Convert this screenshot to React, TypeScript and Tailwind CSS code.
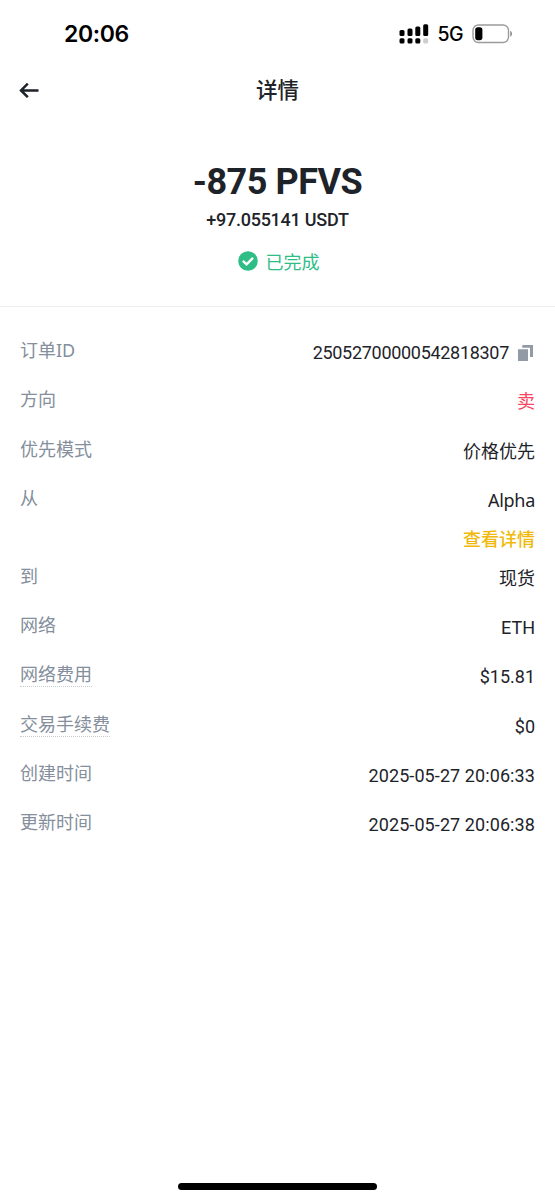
import type { ReactNode } from "react"
import clsx from "clsx"

const StatusBar = () => (
  <div className="flex h-[66px] items-center justify-between pl-16 pr-[41px] pt-px text-black">
    <span className="pt-px font-['Inter',sans-serif] text-[23px] font-semibold tracking-[-0.35px]">
      20:06
    </span>
    <div className="flex items-center">
      <svg width="30" height="20" viewBox="0 0 30 20" className="mr-[9px]">
        <rect x="0.5" y="6" width="5" height="6" rx="1.5" />
        <rect x="8.5" y="4.5" width="5" height="7.5" rx="1.5" />
        <rect x="16.3" y="2.5" width="5" height="9.5" rx="1.5" />
        <rect x="24.2" y="0.2" width="5" height="11.8" rx="1.5" />
        <rect x="0.5" y="14.2" width="5" height="5.2" rx="1.5" />
        <rect x="8.5" y="14.2" width="5" height="5.2" rx="1.5" />
        <rect x="16.3" y="14.2" width="5" height="5.2" rx="1.5" />
        <rect x="24.2" y="14.2" width="5" height="5.2" rx="1.5" fill="#cfcfcf" />
      </svg>
      <span className="mr-[9px] pt-[3px] font-['Inter',sans-serif] text-[19.5px] font-medium tracking-[-0.6px]">
        5G
      </span>
      <svg width="42" height="20" viewBox="0 0 42 20">
        <rect x="1" y="1" width="35.5" height="17.5" rx="5.5" fill="none" stroke="#9b9b9b" strokeWidth="1.4" />
        <rect x="3.2" y="3.2" width="7.2" height="13" rx="2.6" />
        <path d="M38.2 6.8c2.4.8 2.4 5.1 0 5.9z" fill="#8e8e8e" />
      </svg>
    </div>
  </div>
)

const Header = () => (
  <header className="grid h-12 grid-cols-3 items-center px-[19px]">
    <svg width="20" height="16" viewBox="0 0 20 16" fill="none" stroke="#1e2329" strokeWidth="2.5">
      <path d="M19.5 8.4H2M8.8 1.6 2 8.4l6.8 6.8" />
    </svg>
    <h1 className="pt-0.5 text-center text-[21.5px] font-medium leading-8">详情</h1>
  </header>
)

const Summary = () => (
  <section className="flex h-[193px] flex-col items-center border-b border-[#eaecef] pt-[46px]">
    <p className="text-[36px] font-bold leading-[44px] tracking-[-0.45px]">-875 PFVS</p>
    <p className="text-[18px] font-medium leading-8 tracking-[-0.25px]">+97.055141 USDT</p>
    <div className="mt-[9px] flex items-center gap-2 pl-[2px] text-lg leading-8 text-[#2ebd85]">
      <svg width="20" height="20" viewBox="0 0 20 20" className="relative -top-px">
        <circle cx="10" cy="10" r="9.8" fill="#2ebd85" />
        <path d="m4.9 9.8 3.7 3.6 6.4-6.6" fill="none" stroke="#fff" strokeWidth="2.4" />
      </svg>
      <span className="pt-0.5">已完成</span>
    </div>
  </section>
)

const CopyIcon = () => (
  <svg width="15" height="16" viewBox="0 0 15 16" fill="#929aa5">
    <path d="M0 4.2h10V16H0zM4.3 0H15v12h-3V2.8H4.3z" />
  </svg>
)

interface RowProps {
  label: string
  hint?: boolean
  children: ReactNode
}

const Row = ({ label, hint, children }: RowProps) => (
  <div className="flex min-h-[49.25px] items-start justify-between">
    <span
      className={clsx(
        "font-['Noto_Sans','Noto_Sans_CJK_SC',sans-serif] leading-[26px] text-[#848e9c]",
        hint && "h-[26px] border-b border-dotted border-[#c8cdd4]"
      )}
    >
      {label}
    </span>
    <div className="flex flex-col items-end pt-[3px] leading-[26px]">{children}</div>
  </div>
)

export default function App() {
  return (
    <div className="flex h-[1200px] w-[555px] flex-col bg-white font-['Roboto','Noto_Sans_CJK_SC',sans-serif] text-[#1e2329]">
      <StatusBar />
      <Header />
      <Summary />
      <main className="flex-1 px-5 pt-[30px] text-lg">
        <Row label="订单ID">
          <div className="flex items-center gap-[9px] pr-[2px]">
            <span className="tracking-[-0.3px]">25052700000542818307</span>
            <CopyIcon />
          </div>
        </Row>
        <Row label="方向">
          <span className="text-[#f6465d]">卖</span>
        </Row>
        <Row label="优先模式">价格优先</Row>
        <Row label="从">
          <span className="-mt-px font-['Noto_Sans',sans-serif] tracking-[-0.3px]">Alpha</span>
          <a className="mb-[10px] mt-[14px] font-medium text-[#f0b90b]">查看详情</a>
        </Row>
        <Row label="到">现货</Row>
        <Row label="网络">ETH</Row>
        <Row label="网络费用" hint>
          $15.81
        </Row>
        <Row label="交易手续费" hint>
          $0
        </Row>
        <Row label="创建时间">
          <span className="tracking-[0.09px]">2025-05-27 20:06:33</span>
        </Row>
        <Row label="更新时间">
          <span className="tracking-[0.09px]">2025-05-27 20:06:38</span>
        </Row>
      </main>
      <div className="mx-auto mb-[10px] h-[7px] w-[199px] rounded-full bg-black" />
    </div>
  )
}
